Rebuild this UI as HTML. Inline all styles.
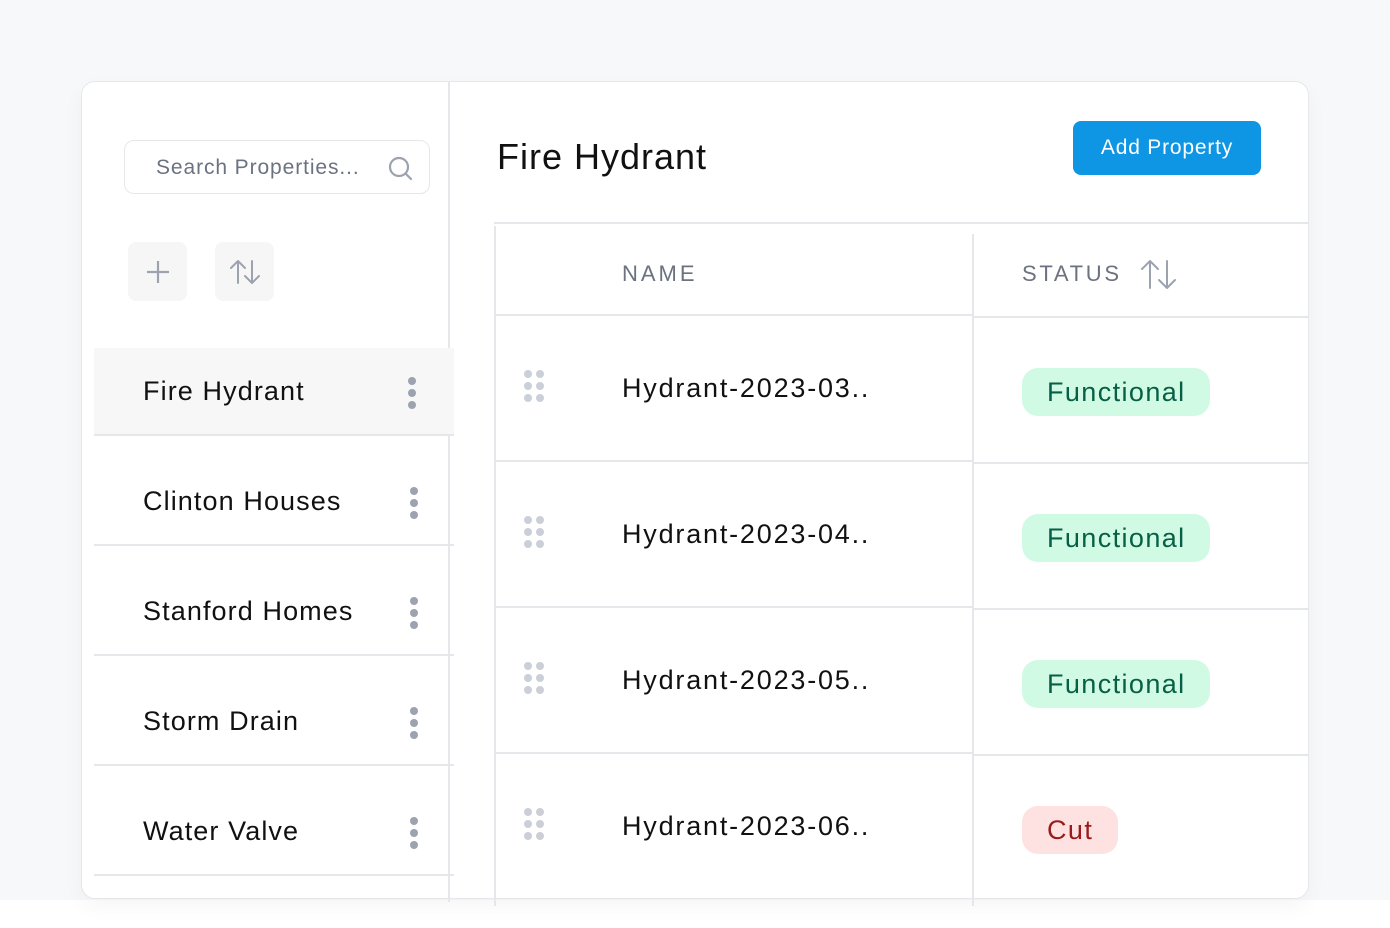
<!DOCTYPE html>
<html><head><style>
*{margin:0;padding:0;box-sizing:border-box}
body{width:1390px;height:928px;background:#fff;font-family:"Liberation Sans",sans-serif;position:relative;overflow:hidden}
.bg{position:absolute;left:0;top:0;width:1390px;height:900px;background:#f7f8fa}
.card{position:absolute;left:81px;top:81px;width:1228px;height:818px;background:#fff;border:1.5px solid #e5e7eb;border-radius:14px;box-shadow:0 8px 20px rgba(0,0,0,0.04);overflow:hidden}
.a{position:absolute}
.hl{position:absolute;height:2px;background:#e5e7eb}
.vl{position:absolute;width:2px;background:#e5e7eb}
.item{position:absolute;left:143px;font-size:27px;color:#111;letter-spacing:1.1px}
.kebab{position:absolute;width:8px}
.kebab i{display:block;width:8px;height:8px;border-radius:50%;background:#9ca3af;margin-bottom:4px}
.name{position:absolute;left:622px;font-size:27px;color:#111;letter-spacing:1.8px}
.grip{position:absolute;left:524px;width:22px;display:grid;grid-template-columns:8px 8px;gap:4px 4px}
.grip i{width:8px;height:8px;border-radius:50%;background:#cbd0d8}
.badge{position:absolute;left:1022px;height:48px;border-radius:16px;font-size:27px;line-height:48px;padding:0 25px;letter-spacing:1.4px}
.f{background:#d1fae5;color:#065f46;width:188px}
.c{background:#fee2e2;color:#991b1b}
</style></head><body>
<div class="bg"></div>
<div class="card"></div>
<div class="a" style="left:124px;top:140px;width:306px;height:54px;border:1.5px solid #e5e7eb;border-radius:10px"></div>
<div class="a" style="left:156px;top:156px;font-size:21px;color:#6b7280;letter-spacing:0.9px">Search Properties...</div>
<svg class="a" style="left:386px;top:154px" width="28" height="28" viewBox="0 0 28 28" fill="none" stroke="#9ca3af" stroke-width="2.2" stroke-linecap="round"><circle cx="13" cy="13" r="9"/><path d="M20 20l5 5"/></svg>
<div class="a" style="left:128px;top:242px;width:59px;height:59px;background:#f6f6f7;border-radius:8px"></div>
<div class="a" style="left:215px;top:242px;width:59px;height:59px;background:#f6f6f7;border-radius:8px"></div>
<svg class="a" style="left:144px;top:258px" width="28" height="28" fill="none" stroke="#9ca3af" stroke-width="2.2"><path d="M14 3v22M3 14h22"/></svg>
<svg class="a" style="left:229px;top:258px" width="32" height="28" fill="none" stroke="#9ca3af" stroke-width="2" stroke-linecap="round" stroke-linejoin="round"><path d="M9 25V3M2 10l7-7 7 7M23 3v22M16 18l7 7 7-7"/></svg>
<div class="vl" style="left:448px;top:82px;height:820px"></div>
<div class="a" style="left:94px;top:348px;width:360px;height:87px;background:#f7f7f8"></div>
<div class="hl" style="left:94px;top:434px;width:360px"></div>
<div class="hl" style="left:94px;top:544px;width:360px"></div>
<div class="hl" style="left:94px;top:654px;width:360px"></div>
<div class="hl" style="left:94px;top:764px;width:360px"></div>
<div class="hl" style="left:94px;top:874px;width:360px"></div>
<div class="item" style="top:376px">Fire Hydrant</div>
<div class="item" style="top:486px">Clinton Houses</div>
<div class="item" style="top:596px">Stanford Homes</div>
<div class="item" style="top:706px">Storm Drain</div>
<div class="item" style="top:816px">Water Valve</div>
<div class="kebab" style="left:408px;top:377px"><i></i><i></i><i></i></div>
<div class="kebab" style="left:410px;top:487px"><i></i><i></i><i></i></div>
<div class="kebab" style="left:410px;top:597px"><i></i><i></i><i></i></div>
<div class="kebab" style="left:410px;top:707px"><i></i><i></i><i></i></div>
<div class="kebab" style="left:410px;top:817px"><i></i><i></i><i></i></div>
<div class="a" style="left:497px;top:136px;font-size:36px;color:#111;letter-spacing:1px">Fire Hydrant</div>
<div class="a" style="left:1073px;top:121px;width:188px;height:54px;background:#0e95e4;border-radius:8px;color:#fff;font-size:21px;line-height:54px;text-align:center;letter-spacing:0.8px">Add Property</div>
<div class="hl" style="left:494px;top:222px;width:815px"></div>
<div class="vl" style="left:494px;top:226px;height:680px"></div>
<div class="vl" style="left:972px;top:234px;height:672px"></div>
<div class="a" style="left:622px;top:261px;font-size:22px;color:#6b7280;letter-spacing:3px">NAME</div>
<div class="a" style="left:1022px;top:261px;font-size:22px;color:#6b7280;letter-spacing:2.7px">STATUS</div>
<svg class="a" style="left:1140px;top:258px" width="38" height="32" fill="none" stroke="#9ca3af" stroke-width="2" stroke-linecap="round" stroke-linejoin="round"><path d="M10 30V3M2 11l8-8 8 8M27 3v27M19 22l8 8 8-8"/></svg>
<div class="hl" style="left:495px;top:314px;width:478px"></div>
<div class="hl" style="left:495px;top:460px;width:478px"></div>
<div class="hl" style="left:495px;top:606px;width:478px"></div>
<div class="hl" style="left:495px;top:752px;width:478px"></div>
<div class="hl" style="left:973px;top:316px;width:336px"></div>
<div class="hl" style="left:973px;top:462px;width:336px"></div>
<div class="hl" style="left:973px;top:608px;width:336px"></div>
<div class="hl" style="left:973px;top:754px;width:336px"></div>
<div class="grip" style="top:370px"><i></i><i></i><i></i><i></i><i></i><i></i></div>
<div class="grip" style="top:516px"><i></i><i></i><i></i><i></i><i></i><i></i></div>
<div class="grip" style="top:662px"><i></i><i></i><i></i><i></i><i></i><i></i></div>
<div class="grip" style="top:808px"><i></i><i></i><i></i><i></i><i></i><i></i></div>
<div class="name" style="top:373px">Hydrant-2023-03..</div>
<div class="name" style="top:519px">Hydrant-2023-04..</div>
<div class="name" style="top:665px">Hydrant-2023-05..</div>
<div class="name" style="top:811px">Hydrant-2023-06..</div>
<div class="badge f" style="top:368px">Functional</div>
<div class="badge f" style="top:514px">Functional</div>
<div class="badge f" style="top:660px">Functional</div>
<div class="badge c" style="top:806px">Cut</div>
</body></html>
